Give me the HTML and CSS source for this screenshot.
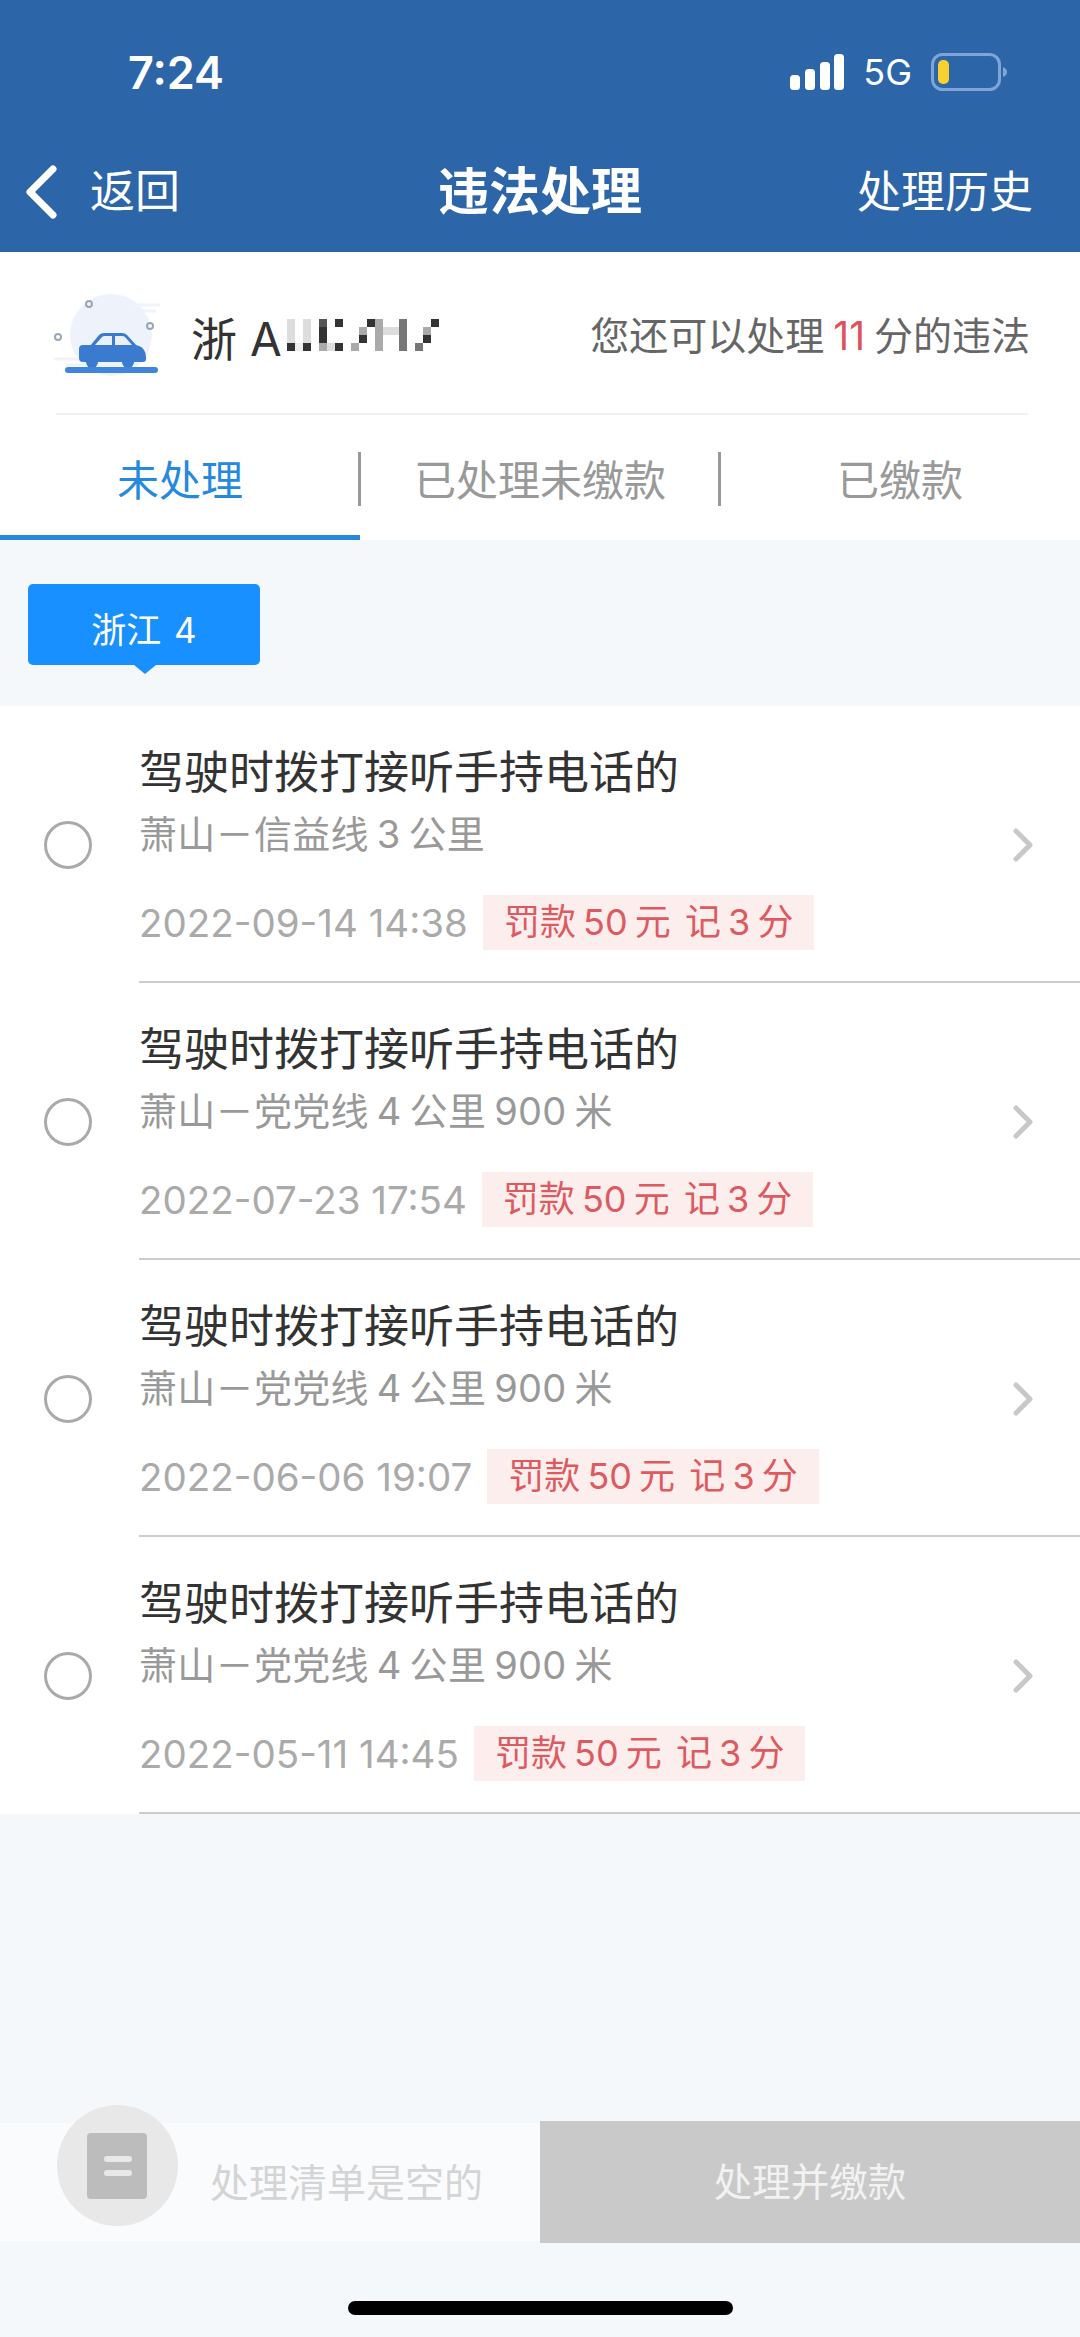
FILE: index.html
```html
<!DOCTYPE html>
<html lang="zh-CN">
  <head>
    <meta charset="UTF-8" />
    <meta name="viewport" content="width=device-width, initial-scale=1.0" />
    <title>违法处理</title>
    <link rel="stylesheet" href="styles.css">
  </head>
  <body>
    <header class="top">
      <div class="status">
        <span class="time">7:24</span>
        <div class="status-right">
          <svg class="signal" width="54" height="36" viewBox="0 0 54 36">
            <rect x="0" y="21" width="10" height="15" rx="3.5" fill="#fff" />
            <rect x="15" y="15" width="10" height="21" rx="3.5" fill="#fff" />
            <rect x="30" y="8" width="10" height="28" rx="3.5" fill="#fff" />
            <rect x="44" y="0" width="10" height="36" rx="3.5" fill="#fff" />
          </svg>
          <span class="net">5G</span>
          <svg class="battery" width="76" height="38" viewBox="0 0 76 38">
            <rect x="1.5" y="1.5" width="67" height="35" rx="10" fill="none" stroke="#7ea5d5" stroke-width="3" />
            <rect x="7" y="7" width="11" height="24" rx="5" fill="#f8d12e" />
            <path d="M72 14c3 1 4 3 4 5s-1 4-4 5z" fill="#7ea5d5" />
          </svg>
        </div>
      </div>
      <nav class="nav">
        <div class="nav-back">
          <svg width="34" height="54" viewBox="0 0 34 54">
            <path d="M29 4 6 27l23 23" fill="none" stroke="#fff" stroke-width="7" stroke-linecap="round" stroke-linejoin="round" />
          </svg>
          <span>返回</span>
        </div>
        <h1 class="nav-title">违法处理</h1>
        <span class="nav-history">处理历史</span>
      </nav>
    </header>

    <section class="car-info">
      <div class="car-left">
        <svg class="car-icon" width="110" height="88" viewBox="0 0 110 88">
          <circle cx="59" cy="43" r="41" fill="#eef3fb" />
          <g fill="none" stroke="#f0f4fa" stroke-width="3">
            <path d="M2 67h28M14 73h18M78 13h30M90 19h14" />
          </g>
          <g fill="none" stroke="#9aa6b8" stroke-width="2">
            <circle cx="37" cy="12" r="3" />
            <circle cx="98" cy="34" r="3" />
            <circle cx="6" cy="45" r="3" />
          </g>
          <path d="M38 54l9-11q2-2 5-2h18q3 0 5 2l10 11z" fill="#3a7bd0" />
          <path d="M43 53l7-8q1-1 3-1h7v9zM63 44h7q2 0 3 1l7 8H63z" fill="#e9f0fa" />
          <path d="M31 53h50q8 0 11 5 2 3 2 7v2q0 3-3 3H31q-4 0-4-4V57q0-4 4-4z" fill="#3a7bd0" />
          <circle cx="40" cy="70" r="6" fill="#3a7bd0" />
          <circle cx="76" cy="70" r="6" fill="#3a7bd0" />
          <rect x="13" y="75" width="93" height="6" rx="3" fill="#3f85dc" />
        </svg>
        <span class="plate">浙 A</span>
        <svg class="mosaic" width="152" height="32" viewBox="0 0 19 4" shape-rendering="crispEdges">
          <g fill="#ddd">
            <rect x="0" y="0" width="1" height="3" />
            <rect x="2" y="0" width="1" height="3" />
            <rect x="5" y="3" width="1" height="1" />
            <rect x="12" y="1" width="2" height="1" />
          </g>
          <rect x="1" y="3" width="1" height="1" fill="#eee" />
          <g fill="#333">
            <rect x="0" y="3" width="1" height="1" />
            <rect x="2" y="3" width="1" height="1" />
            <rect x="4" y="1" width="1" height="2" />
            <rect x="6" y="0" width="1" height="1" />
            <rect x="6" y="3" width="1" height="1" />
            <rect x="9" y="2" width="1" height="1" />
            <rect x="10" y="0" width="1" height="1" />
            <rect x="17" y="2" width="1" height="1" />
            <rect x="18" y="0" width="1" height="1" />
          </g>
          <g fill="#777">
            <rect x="14" y="0" width="1" height="4" />
            <rect x="16" y="3" width="1" height="1" />
          </g>
          <rect x="4" y="0" width="1" height="1" fill="#555" />
          <g fill="#aaa">
            <rect x="4" y="3" width="1" height="1" />
            <rect x="8" y="3" width="1" height="1" />
            <rect x="9" y="1" width="1" height="1" />
            <rect x="11" y="0" width="1" height="4" />
            <rect x="17" y="1" width="1" height="1" />
          </g>
        </svg>
      </div>
      <p class="quota">您还可以处理 <em>11</em> 分的违法</p>
    </section>

    <div class="tabs">
      <div class="tab active">未处理</div>
      <div class="tab">已处理未缴款</div>
      <div class="tab">已缴款</div>
    </div>

    <div class="regions">
      <span class="region-tag">浙江 4</span>
    </div>

    <ul class="list">
      <li class="row">
        <span class="radio"></span>
        <div class="row-body">
          <h3>驾驶时拨打接听手持电话的</h3>
          <p class="place">萧山－信益线 3 公里</p>
          <div class="meta"><time>2022-09-14 14:38</time><span class="fine">罚款 50 元&nbsp; 记 3 分</span></div>
        </div>
        <svg class="chevron" width="24" height="36" viewBox="0 0 24 36"><path d="M4 4l14 14L4 32" fill="none" stroke="#c8c8c8" stroke-width="5" stroke-linecap="round" stroke-linejoin="round" /></svg>
      </li>
      <li class="row">
        <span class="radio"></span>
        <div class="row-body">
          <h3>驾驶时拨打接听手持电话的</h3>
          <p class="place">萧山－党党线 4 公里 900 米</p>
          <div class="meta"><time>2022-07-23 17:54</time><span class="fine">罚款 50 元&nbsp; 记 3 分</span></div>
        </div>
        <svg class="chevron" width="24" height="36" viewBox="0 0 24 36"><path d="M4 4l14 14L4 32" fill="none" stroke="#c8c8c8" stroke-width="5" stroke-linecap="round" stroke-linejoin="round" /></svg>
      </li>
      <li class="row">
        <span class="radio"></span>
        <div class="row-body">
          <h3>驾驶时拨打接听手持电话的</h3>
          <p class="place">萧山－党党线 4 公里 900 米</p>
          <div class="meta"><time>2022-06-06 19:07</time><span class="fine">罚款 50 元&nbsp; 记 3 分</span></div>
        </div>
        <svg class="chevron" width="24" height="36" viewBox="0 0 24 36"><path d="M4 4l14 14L4 32" fill="none" stroke="#c8c8c8" stroke-width="5" stroke-linecap="round" stroke-linejoin="round" /></svg>
      </li>
      <li class="row">
        <span class="radio"></span>
        <div class="row-body">
          <h3>驾驶时拨打接听手持电话的</h3>
          <p class="place">萧山－党党线 4 公里 900 米</p>
          <div class="meta"><time>2022-05-11 14:45</time><span class="fine">罚款 50 元&nbsp; 记 3 分</span></div>
        </div>
        <svg class="chevron" width="24" height="36" viewBox="0 0 24 36"><path d="M4 4l14 14L4 32" fill="none" stroke="#c8c8c8" stroke-width="5" stroke-linecap="round" stroke-linejoin="round" /></svg>
      </li>
    </ul>

    <footer class="bottom">
      <div class="cart">
        <div class="cart-icon"><span></span><span></span></div>
        <span class="cart-text">处理清单是空的</span>
      </div>
      <div class="pay">处理并缴款</div>
    </footer>
    <div class="home-bar"><span></span></div>
  </body>
</html>
```

FILE: styles.css
```css
* {
  box-sizing: border-box;
}

html,
body {
  margin: 0;
  padding: 0;
}

body {
  width: 1080px;
  height: 2337px;
  display: flex;
  flex-direction: column;
  background-color: #f5f8fb;
  font-family: Inter, "Noto Sans CJK SC", sans-serif;
  overflow: hidden;
}

h1,
h3,
p,
ul {
  margin: 0;
  padding: 0;
}

.top {
  height: 252px;
  background-color: #2c65a8;
  color: white;
}

.status {
  height: 165px;
  padding: 50px 73px 0 128px;
  display: flex;
  justify-content: space-between;
  align-items: flex-start;
}

.time {
  font-size: 45px;
  font-weight: 600;
  line-height: 46px;
}

.status-right {
  display: flex;
  align-items: center;
  gap: 19px;
  padding-top: 3px;
}

.net {
  font-size: 36px;
  line-height: 36px;
}

.nav {
  height: 87px;
  padding: 0 24px;
  display: grid;
  grid-template-columns: 1fr auto 1fr;
  align-items: start;
}

.nav-back {
  display: flex;
  align-items: center;
  gap: 32px;
  font-size: 45px;
  line-height: 54px;
}

.nav-title {
  font-size: 51px;
  font-weight: 700;
  line-height: 54px;
}

.nav-history {
  justify-self: end;
  margin-right: 23px;
  font-size: 44px;
  line-height: 54px;
}

.car-info {
  height: 163px;
  margin: 0 52px 0 56px;
  padding-top: 40px;
  border-bottom: 2px solid #f1f1f1;
  display: flex;
  justify-content: space-between;
  align-items: flex-start;
  background-color: white;
  box-shadow: -56px 0 0 white, 52px 0 0 white;
}

.car-left {
  display: flex;
  align-items: center;
  margin-left: -4px;
}

.plate {
  margin-left: 29px;
  font-size: 46px;
  color: #333;
}

.mosaic {
  margin-left: 5px;
  margin-top: -2px;
}

.quota {
  margin-top: 21px;
  margin-right: -2px;
  font-size: 39px;
  line-height: 46px;
  word-spacing: -2px;
  color: #666;
}

.quota em {
  font-style: normal;
  color: #e0505a;
}

.tabs {
  height: 125px;
  display: flex;
  background-color: white;
}

.tab {
  position: relative;
  flex: 1;
  padding-top: 7px;
  text-align: center;
  font-size: 42px;
  line-height: 118px;
  color: #999;
}

.tab + .tab::before {
  content: "";
  position: absolute;
  left: -2px;
  top: 37px;
  width: 3px;
  height: 54px;
  background-color: #999;
}

.tab.active {
  color: #2589dc;
  border-bottom: 5px solid #2589dc;
}

.regions {
  height: 166px;
  padding: 44px 0 0 28px;
}

.region-tag {
  position: relative;
  display: block;
  width: 232px;
  height: 81px;
  border-radius: 5px;
  background-color: #1890ff;
  color: white;
  font-size: 35px;
  line-height: 92px;
  word-spacing: 3px;
  text-align: center;
}

.region-tag::after {
  content: "";
  position: absolute;
  left: 106px;
  bottom: -9px;
  width: 0;
  height: 0;
  border-left: 11px solid transparent;
  border-right: 11px solid transparent;
  border-top: 9px solid #1890ff;
}

.list {
  list-style: none;
  background-color: white;
}

.row {
  height: 277px;
  display: flex;
  align-items: center;
}

.radio {
  flex: none;
  width: 48px;
  height: 48px;
  margin: 0 47px 0 44px;
  border: 3px solid #aaa;
  border-radius: 50%;
}

.row-body {
  flex: 1;
  height: 277px;
  padding-top: 42px;
  border-bottom: 2px solid #ccc;
}

.row-body h3 {
  font-size: 45px;
  font-weight: 400;
  line-height: 50px;
  color: #333;
}

.place {
  margin-top: 14px;
  font-size: 38px;
  line-height: 44px;
  letter-spacing: 0.3px;
  word-spacing: -3px;
  color: #999;
}

.meta {
  margin-top: 39px;
  display: flex;
  align-items: center;
  gap: 15px;
}

.meta time {
  font-size: 38.5px;
  color: #aaa;
}

.fine {
  height: 55px;
  padding: 0 21px;
  background-color: #fdeeee;
  color: #dd5a60;
  font-size: 36px;
  line-height: 55px;
  word-spacing: -3px;
}

.chevron {
  flex: none;
  position: relative;
  margin-left: -68px;
  margin-right: 44px;
}

.bottom {
  margin-top: auto;
  height: 122px;
  display: flex;
}

.cart {
  position: relative;
  width: 540px;
  margin: 2px 0;
  padding: 36px 0 0 210px;
  background-color: #fafbfd;
}

.cart-icon {
  position: absolute;
  left: 57px;
  top: -18px;
  width: 121px;
  height: 121px;
  border-radius: 50%;
  background-color: #e8e8e8;
  display: flex;
  flex-direction: column;
  justify-content: center;
  align-items: center;
  gap: 8px;
}

.cart-icon::before {
  content: "";
  position: absolute;
  left: 30px;
  top: 28px;
  width: 60px;
  height: 66px;
  border-radius: 4px;
  background-color: #bcbcbc;
}

.cart-icon span {
  position: relative;
  width: 28px;
  height: 6px;
  border-radius: 3px;
  background-color: #e8e8e8;
}

.cart-text {
  font-size: 39px;
  line-height: 48px;
  color: #d4d4d4;
}

.pay {
  width: 540px;
  background-color: #c9c9c9;
  color: #f2f2f2;
  font-size: 38.5px;
  line-height: 122px;
  text-align: center;
}

.home-bar {
  height: 94px;
  padding-top: 58px;
  display: flex;
  justify-content: center;
}

.home-bar span {
  width: 385px;
  height: 14px;
  border-radius: 7px;
  background-color: black;
}
```
